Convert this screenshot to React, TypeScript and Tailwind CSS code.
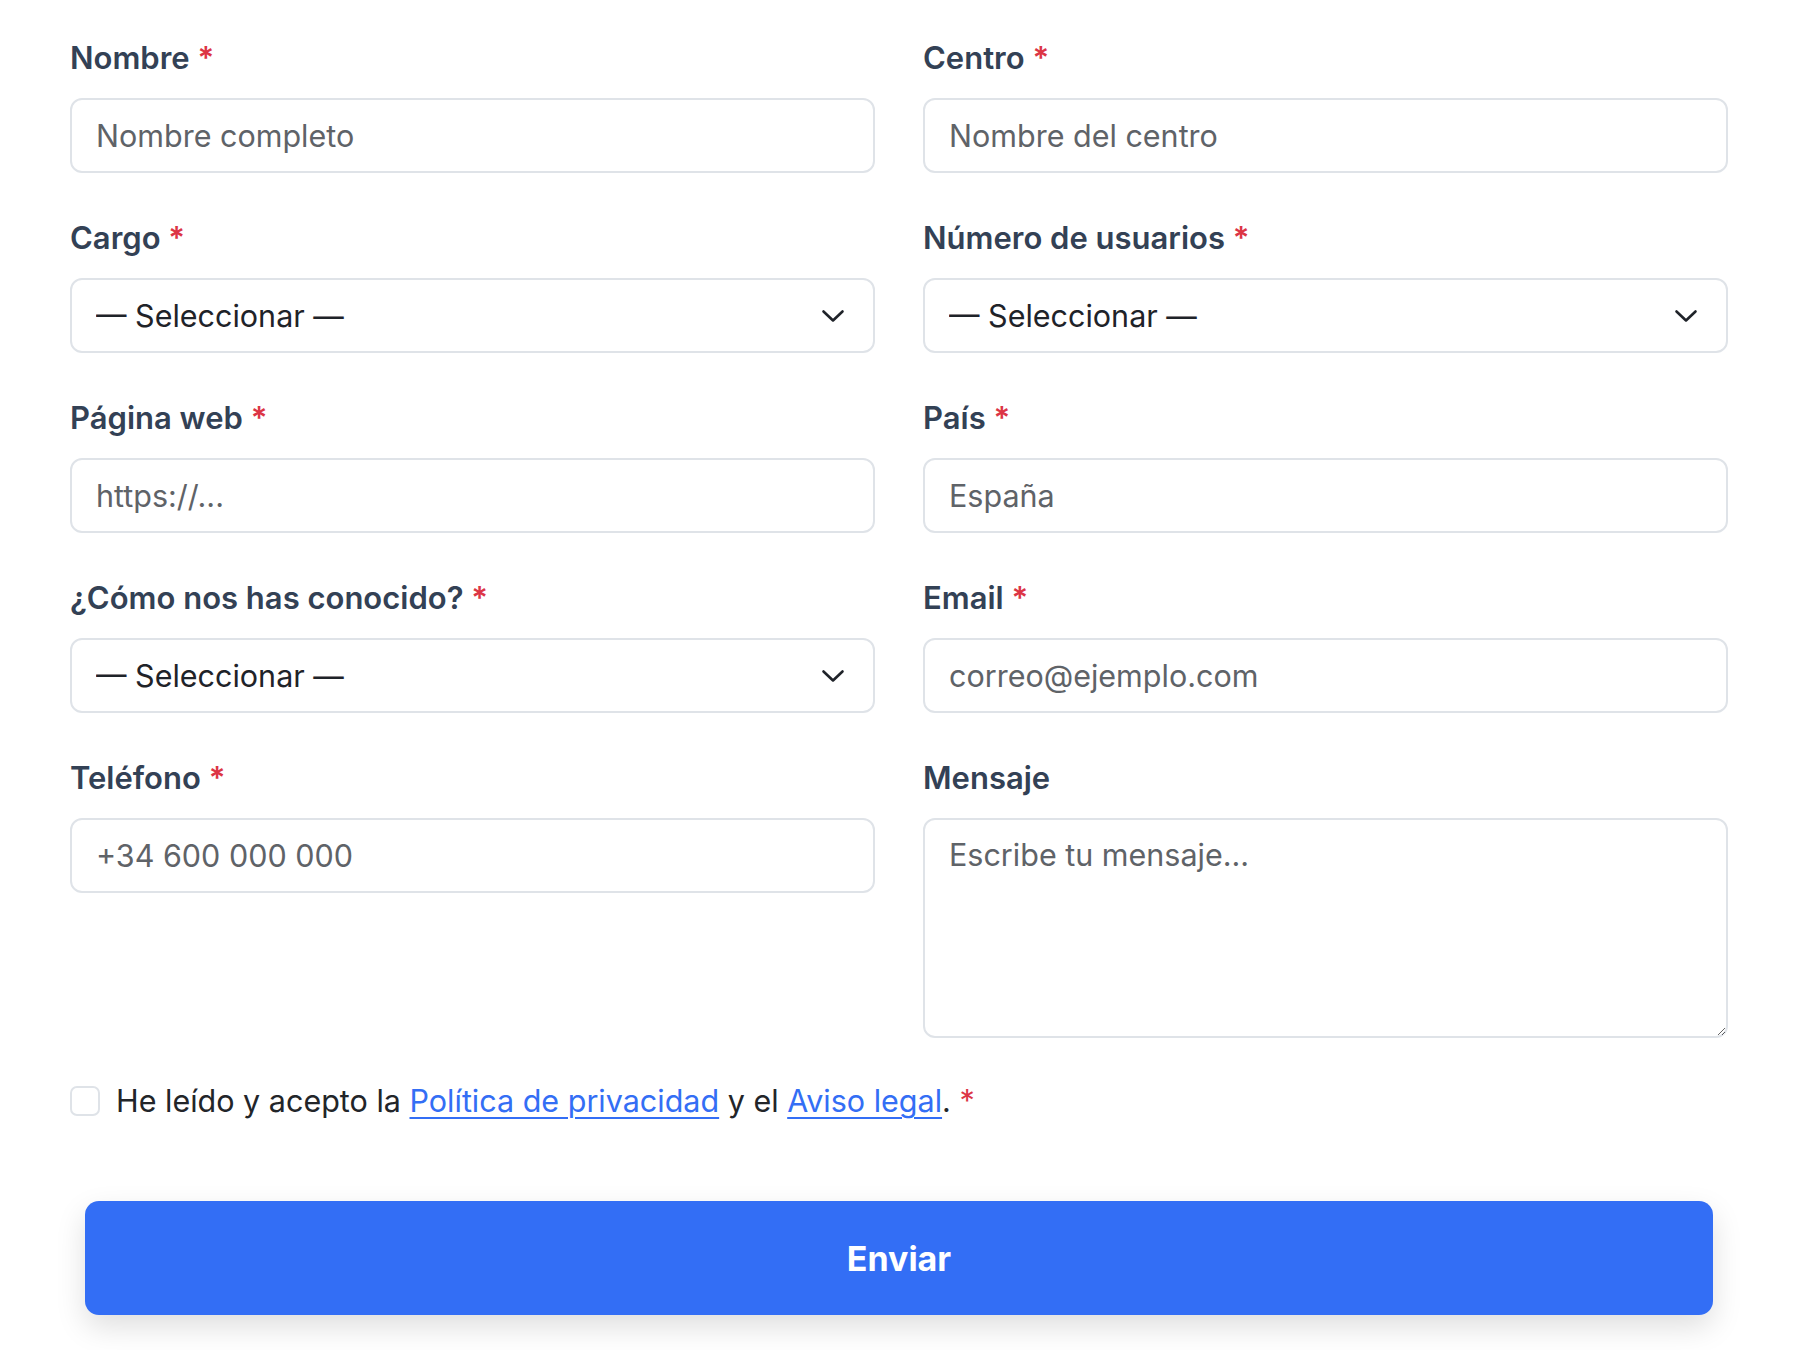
import React from 'react';

const fieldClass =
  'w-full h-[75px] rounded-[12px] border-2 border-[#dfe3e8] bg-white px-[24px] text-[30.5px] text-[#1f2329] placeholder:text-[#5f6368] outline-none';

function Label({ text, required = true }: { text: string; required?: boolean }) {
  return (
    <label className="block h-[40px] leading-[40px] mb-[20px] text-[31px] font-semibold text-[#334155]">
      {text}
      {required && <span className="text-[#dc3545]"> *</span>}
    </label>
  );
}

function Chevron() {
  return (
    <svg width="24" height="14" viewBox="0 0 24 14" fill="none" className="pointer-events-none absolute right-[30px] top-1/2 -translate-y-1/2">
      <path d="M2.5 2.5l9.5 9 9.5-9" stroke="#1f2329" strokeWidth="2.6" strokeLinecap="round" strokeLinejoin="round" />
    </svg>
  );
}

function SelectField({ label }: { label: string }) {
  return (
    <div>
      <Label text={label} />
      <div className="relative">
        <select className={fieldClass + ' appearance-none'} defaultValue="">
          <option value="">— Seleccionar —</option>
        </select>
        <Chevron />
      </div>
    </div>
  );
}

function InputField({ label, placeholder }: { label: string; placeholder: string }) {
  return (
    <div>
      <Label text={label} />
      <input className={fieldClass} placeholder={placeholder} />
    </div>
  );
}

export default function App() {
  return (
    <div className="min-h-screen bg-white font-['Inter','Liberation_Sans',sans-serif]">
      <form className="ml-[70px] w-[1658px] pt-[38px]" onSubmit={(e) => e.preventDefault()}>
        <div className="grid grid-cols-2 items-start gap-x-[48px] gap-y-[45px]">
          <InputField label="Nombre" placeholder="Nombre completo" />
          <InputField label="Centro" placeholder="Nombre del centro" />
          <SelectField label="Cargo" />
          <SelectField label="Número de usuarios" />
          <InputField label="Página web" placeholder="https://..." />
          <InputField label="País" placeholder="España" />
          <SelectField label="¿Cómo nos has conocido?" />
          <InputField label="Email" placeholder="correo@ejemplo.com" />
          <InputField label="Teléfono" placeholder="+34 600 000 000" />
          <div>
            <Label text="Mensaje" required={false} />
            <textarea
              className="block w-full h-[220px] rounded-[12px] border-2 border-[#dfe3e8] bg-white px-[24px] py-[15px] text-[30.5px] leading-[40px] text-[#1f2329] placeholder:text-[#5f6368] outline-none"
              placeholder="Escribe tu mensaje..."
            />
          </div>
        </div>

        <div className="mt-[43px] flex h-[40px] items-center gap-[16px]">
          <input
            type="checkbox"
            className="h-[30px] w-[30px] shrink-0 appearance-none rounded-[7px] border-2 border-[#dfe3e8] bg-white"
          />
          <span className="text-[30.5px] text-[#222529]">
            He leído y acepto la{' '}
            <a href="#" className="text-[#336ef5] underline decoration-2 underline-offset-[5px]">Política de privacidad</a>{' '}
            y el{' '}
            <a href="#" className="text-[#336ef5] underline decoration-2 underline-offset-[5px]">Aviso legal</a>.{' '}
            <span className="text-[#dc3545]">*</span>
          </span>
        </div>

        <div className="mt-[80px] px-[15px]">
          <button
            type="submit"
            className="h-[114px] w-full rounded-[14px] bg-[#336ef5] text-[34px] font-bold text-white shadow-[0_12px_30px_rgba(0,0,0,0.13)]"
          >
            Enviar
          </button>
        </div>
      </form>
    </div>
  );
}
